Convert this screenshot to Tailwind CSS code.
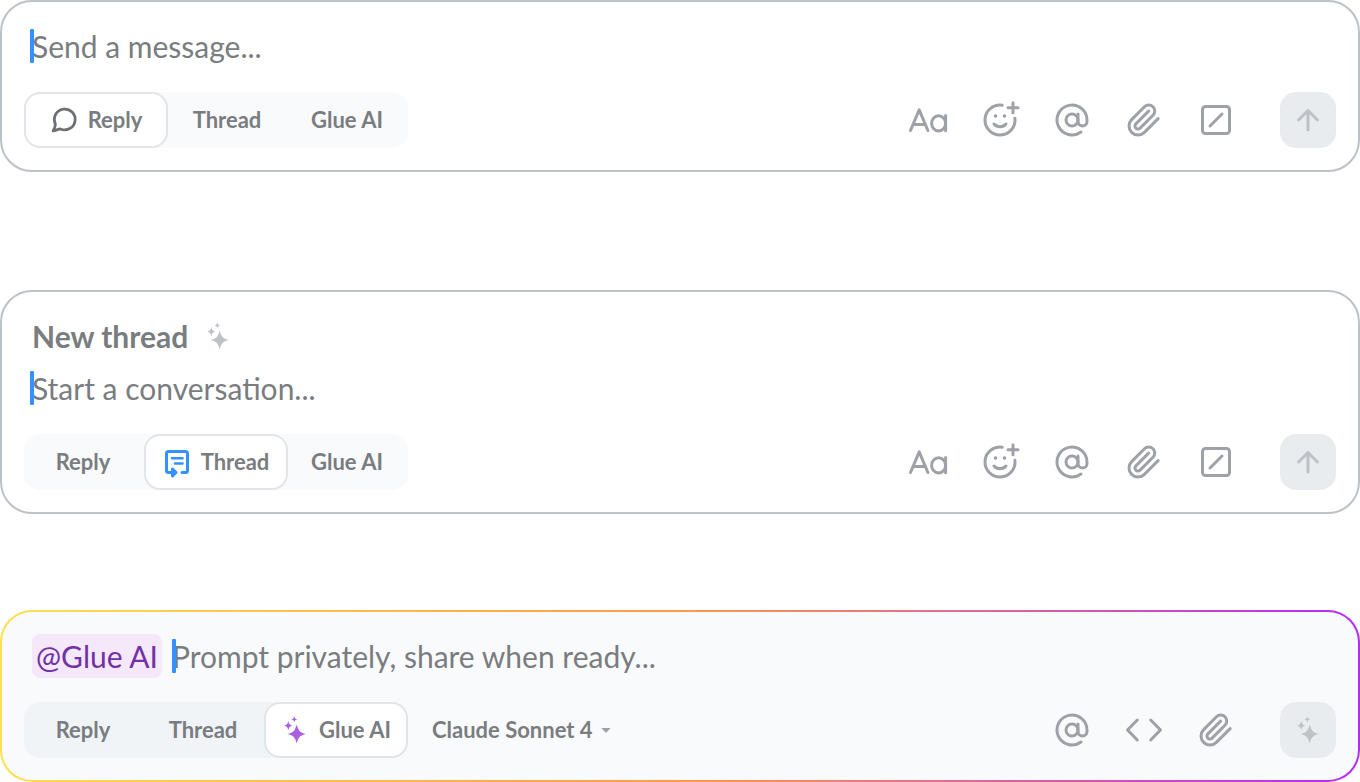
<!DOCTYPE html>
<html lang="en">
<head>
    <meta charset="UTF-8">
    <meta name="viewport" content="width=device-width, initial-scale=1.0">
    <title>Message composer</title>
    <script src="https://cdn.jsdelivr.net/npm/@tailwindcss/browser@4"></script>
</head>
<body class="bg-white font-['Lato',sans-serif] text-[#797d80]">
    <!-- shared icons -->
    <svg class="hidden" aria-hidden="true">
        <symbol id="sparkles" viewBox="0 0 32 32">
            <path d="M17.7 10.5C19.3 16.7 20.8 18.4 27 20C20.8 21.6 19.3 23.3 17.7 29.5C16.1 23.3 14.6 21.6 8.4 20C14.6 18.4 16.1 16.7 17.7 10.5Z" fill="currentColor"/>
            <path d="M9.3 6.9C10.1 10.1 10.8 10.8 14 11.6C10.8 12.4 10.1 13.1 9.3 16.3C8.5 13.1 7.8 12.4 4.6 11.6C7.8 10.8 8.5 10.1 9.3 6.9Z" fill="currentColor"/>
            <path d="M15.3 2.2C15.8 4.3 16.3 4.8 18.4 5.3C16.3 5.8 15.8 6.3 15.3 8.4C14.8 6.3 14.3 5.8 12.2 5.3C14.3 4.8 14.8 4.3 15.3 2.2Z" fill="currentColor"/>
        </symbol>
        <symbol id="format" viewBox="0 0 40 40">
            <g fill="none" stroke="currentColor" stroke-width="3" stroke-linecap="round" stroke-linejoin="round">
                <polyline points="2.5,30.5 11.2,9.8 19.9,30.5"/>
                <line x1="5.5" y1="24.5" x2="17" y2="24.5"/>
                <ellipse cx="30.6" cy="23.3" rx="7" ry="7.6"/>
                <line x1="37.6" y1="15.5" x2="37.6" y2="30.8"/>
            </g>
        </symbol>
        <symbol id="emoji" viewBox="0 0 40 40">
            <g fill="none" stroke="currentColor" stroke-width="3" stroke-linecap="round">
                <path d="M22.2 5.2A15 15 0 1 0 34.9 18.2"/>
                <path d="M14 24C17 27.6 23 27.6 26 24"/>
                <path d="M33 2.8V12.8M28 7.8H38"/>
            </g>
            <circle cx="15.5" cy="16" r="1.8" fill="currentColor"/>
            <circle cx="24.5" cy="16" r="1.8" fill="currentColor"/>
        </symbol>
        <symbol id="at" viewBox="0 0 24 24">
            <g fill="none" stroke="currentColor" stroke-width="2" stroke-linecap="round" stroke-linejoin="round">
                <circle cx="12" cy="12" r="4"/>
                <path d="M16 8v5a3 3 0 0 0 6 0v-1a10 10 0 1 0-4 8"/>
            </g>
        </symbol>
        <symbol id="clip" viewBox="0 0 24 24">
            <path d="m21.44 11.05-9.19 9.19a6 6 0 0 1-8.49-8.49l8.57-8.57A4 4 0 1 1 18 8.84l-8.59 8.57a2 2 0 0 1-2.83-2.83l8.49-8.48" fill="none" stroke="currentColor" stroke-width="2" stroke-linecap="round" stroke-linejoin="round"/>
        </symbol>
        <symbol id="slash" viewBox="0 0 40 40">
            <g fill="none" stroke="currentColor" stroke-width="3" stroke-linecap="round">
                <rect x="6.5" y="6.5" width="27" height="27" rx="3"/>
                <path d="M14 26L26 14"/>
            </g>
        </symbol>
        <symbol id="code" viewBox="0 0 40 40">
            <path d="M13.3 10L3.5 20L13.3 30M26.7 10L36.5 20L26.7 30" fill="none" stroke="currentColor" stroke-width="3" stroke-linecap="round" stroke-linejoin="round"/>
        </symbol>
        <symbol id="arrow-up" viewBox="0 0 40 40">
            <path d="M20 30V10.5M10.5 20L20 10.5L29.5 20" fill="none" stroke="currentColor" stroke-width="3" stroke-linecap="round" stroke-linejoin="round"/>
        </symbol>
    </svg>

    <main>
        <!-- Reply -->
        <form class="rounded-[32px] border-2 border-[#bdc1c8] bg-white p-[22px]">
            <div class="relative px-2">
                <span class="absolute left-1.5 top-[5px] h-[34px] w-1 rounded-[1px] bg-[#3392ff]"></span>
                <input type="text" aria-label="Message" placeholder="Send a message..." class="block h-11 w-full text-[30px] outline-none placeholder:text-[#797d80]">
            </div>
            <div class="mt-6 flex items-center">
                <div class="flex rounded-2xl bg-[#f9fafc] text-[22px] leading-8 font-bold">
                    <button type="button" class="flex h-14 w-36 items-center justify-center gap-2 rounded-2xl border-2 border-[#e1e4e9] bg-white pr-0.5">
                        <svg class="size-8 text-[#6d7174]" viewBox="0 0 32 32" fill="none" stroke="currentColor" stroke-width="2.8" stroke-linejoin="round" aria-hidden="true">
                            <path d="M12.4 24.9A10.4 10.4 0 1 0 7.3 19.8C7.6 22 6.4 24.5 5.1 26.8C7.5 26.9 10 24.9 12.4 24.9Z"/>
                        </svg>
                        Reply
                    </button>
                    <button type="button" class="h-14 w-30 pr-0.5">Thread</button>
                    <button type="button" class="h-14 w-30 pr-0.5">Glue AI</button>
                </div>
                <div class="ml-auto flex items-center gap-8 text-[#9ea2a8]">
                    <button type="button" aria-label="Formatting" class="flex size-10 items-center justify-center"><svg class="size-10"><use href="#format"/></svg></button>
                    <button type="button" aria-label="Add emoji" class="flex size-10 items-center justify-center"><svg class="size-10"><use href="#emoji"/></svg></button>
                    <button type="button" aria-label="Mention" class="flex size-10 items-center justify-center"><svg class="size-9"><use href="#at"/></svg></button>
                    <button type="button" aria-label="Attach file" class="flex size-10 items-center justify-center"><svg class="size-9"><use href="#clip"/></svg></button>
                    <button type="button" aria-label="Commands" class="flex size-10 items-center justify-center"><svg class="size-10"><use href="#slash"/></svg></button>
                </div>
                <button type="submit" aria-label="Send" class="ml-11 flex size-14 items-center justify-center rounded-2xl bg-[#e8ecef] text-[#bdc1c8]"><svg class="size-10"><use href="#arrow-up"/></svg></button>
            </div>
        </form>

        <!-- New thread -->
        <form class="mt-[118px] rounded-[32px] border-2 border-[#bdc1c8] bg-white p-[22px]">
            <div class="flex h-11 items-center gap-3.5 px-2">
                <h2 class="text-[30px] font-bold leading-11">New thread</h2>
                <svg class="size-8 text-[#bdc1c8]" aria-hidden="true"><use href="#sparkles"/></svg>
            </div>
            <div class="relative mt-2 px-2">
                <span class="absolute left-1.5 top-[5px] h-[34px] w-1 rounded-[1px] bg-[#3392ff]"></span>
                <input type="text" aria-label="First message" placeholder="Start a conversation..." class="block h-11 w-full text-[30px] outline-none placeholder:text-[#797d80]">
            </div>
            <div class="mt-6 flex items-center">
                <div class="flex rounded-2xl bg-[#f9fafc] text-[22px] leading-8 font-bold">
                    <button type="button" class="h-14 w-30 pr-0.5">Reply</button>
                    <button type="button" class="flex h-14 w-36 items-center justify-center gap-2 rounded-2xl border-2 border-[#e1e4e9] bg-white pr-0.5">
                        <svg class="size-8 text-[#3392ff]" viewBox="0 0 32 32" fill="none" stroke="currentColor" stroke-width="3" stroke-linecap="round" stroke-linejoin="round" aria-hidden="true">
                            <path d="M14 26.5H7.5A2 2 0 0 1 5.5 24.5V7.5A2 2 0 0 1 7.5 5.5H24.5A2 2 0 0 1 26.5 7.5V24.5A2 2 0 0 1 24.5 26.5H21"/>
                            <path d="M11.5 23L15 26.5L11.5 30Z"/>
                            <path d="M11 12.3H21.5M14 17.5H21.5" stroke-width="2.6"/>
                        </svg>
                        Thread
                    </button>
                    <button type="button" class="h-14 w-30 pr-0.5">Glue AI</button>
                </div>
                <div class="ml-auto flex items-center gap-8 text-[#9ea2a8]">
                    <button type="button" aria-label="Formatting" class="flex size-10 items-center justify-center"><svg class="size-10"><use href="#format"/></svg></button>
                    <button type="button" aria-label="Add emoji" class="flex size-10 items-center justify-center"><svg class="size-10"><use href="#emoji"/></svg></button>
                    <button type="button" aria-label="Mention" class="flex size-10 items-center justify-center"><svg class="size-9"><use href="#at"/></svg></button>
                    <button type="button" aria-label="Attach file" class="flex size-10 items-center justify-center"><svg class="size-9"><use href="#clip"/></svg></button>
                    <button type="button" aria-label="Commands" class="flex size-10 items-center justify-center"><svg class="size-10"><use href="#slash"/></svg></button>
                </div>
                <button type="submit" aria-label="Send" class="ml-11 flex size-14 items-center justify-center rounded-2xl bg-[#e8ecef] text-[#bdc1c8]"><svg class="size-10"><use href="#arrow-up"/></svg></button>
            </div>
        </form>

        <!-- Glue AI -->
        <div class="mt-24 rounded-[32px] bg-linear-to-r/srgb from-[#ffdf4f] via-[#ff9a4a] to-[#b42af8] p-0.5">
            <form class="rounded-[30px] bg-[#f9fafc] p-[22px]">
                <div class="flex items-center gap-2.5 px-2">
                    <span class="h-11 shrink-0 rounded-lg bg-[#f4e8fa] px-1 text-[30px] leading-11 text-[#7331a6]">@Glue AI</span>
                    <div class="relative grow">
                        <span class="absolute left-0 top-[5px] h-[34px] w-1 rounded-[1px] bg-[#3392ff]"></span>
                        <input type="text" aria-label="Prompt" placeholder="Prompt privately, share when ready..." class="block h-11 w-full text-[30px] outline-none placeholder:text-[#797d80]">
                    </div>
                </div>
                <div class="mt-6 flex items-center">
                    <div class="flex rounded-2xl bg-[#f0f4f7] text-[22px] leading-8 font-bold">
                        <button type="button" class="h-14 w-30 pr-0.5">Reply</button>
                        <button type="button" class="h-14 w-30 pr-0.5">Thread</button>
                        <button type="button" class="flex h-14 w-36 items-center justify-center gap-2 rounded-2xl border-2 border-[#e1e4e9] bg-white pr-0.5">
                            <svg class="size-8 text-[#ab5fe3]" aria-hidden="true"><use href="#sparkles"/></svg>
                            Glue AI
                        </button>
                    </div>
                    <label class="ml-6 flex items-center gap-2">
                        <select aria-label="Model" class="h-8 appearance-none text-[22px] leading-8 font-bold outline-none">
                            <option>Claude Sonnet 4</option>
                        </select>
                        <svg class="h-[5px] w-2.5 text-[#9ea2a8]" viewBox="0 0 10 5" aria-hidden="true"><path d="M0.3 0H9.7L5 5Z" fill="currentColor"/></svg>
                    </label>
                    <div class="ml-auto flex items-center gap-8 text-[#9ea2a8]">
                        <button type="button" aria-label="Mention" class="flex size-10 items-center justify-center"><svg class="size-9"><use href="#at"/></svg></button>
                        <button type="button" aria-label="Insert code" class="flex size-10 items-center justify-center"><svg class="size-10"><use href="#code"/></svg></button>
                        <button type="button" aria-label="Attach file" class="flex size-10 items-center justify-center"><svg class="size-9"><use href="#clip"/></svg></button>
                    </div>
                    <button type="submit" aria-label="Ask Glue AI" class="ml-11 flex size-14 items-center justify-center rounded-2xl bg-[#e8ecef] text-[#bdc1c8]"><svg class="size-8"><use href="#sparkles"/></svg></button>
                </div>
            </form>
        </div>
    </main>
</body>
</html>
